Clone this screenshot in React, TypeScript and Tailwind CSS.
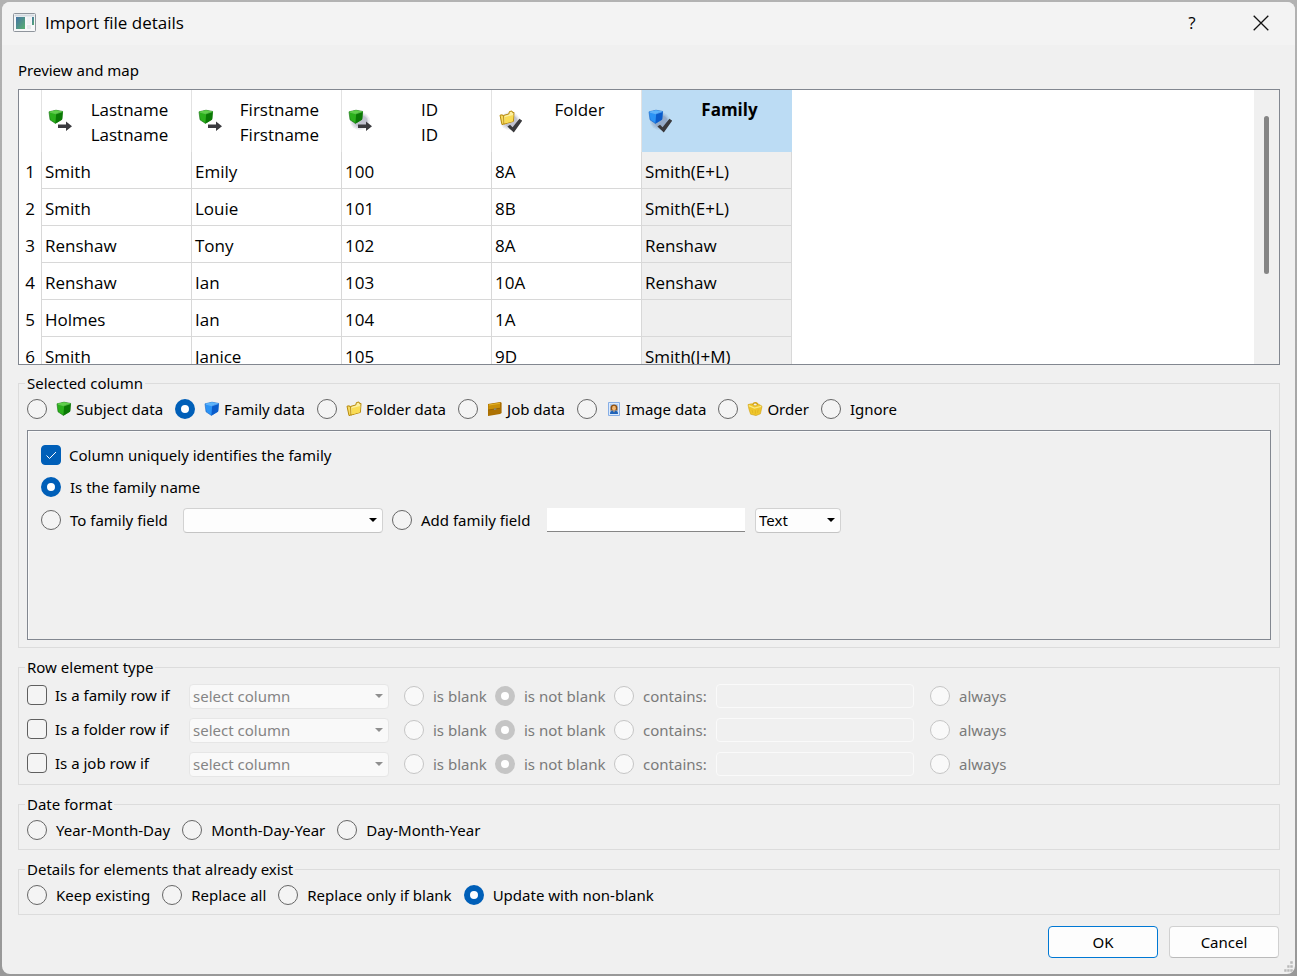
import React, { useId } from "react";

type IconProps = { className?: string };

function CubeShape({ tone }: { tone: "green" | "blue" }) {
  const c =
    tone === "green"
      ? { top: "#5fd04a", left: "#2bb01c", right: "#0b7a05", edge: "#0c6a08", shine: "#7ed56c" }
      : { top: "#5cb4fb", left: "#2b93f5", right: "#0a5ccb", edge: "#0f5fc4", shine: "#7fc2fb" };
  return (
    <g strokeLinejoin="round">
      <path d="M1 2.8 8 1.2l6.6 1.2L14 10.4 7.4 14.4 2 10.8Z" fill={c.left} stroke={c.edge} strokeWidth=".6" />
      <path d="M1 2.8 8 1.2l6.6 1.2-6.4 2.2Z" fill={c.top} />
      <path d="M8.2 4.6l6.4-2.2L14 10.4 7.4 14.4Z" fill={c.right} />
      <path d="M1.6 3.1l6.4 1.7 6-2" stroke={c.shine} strokeWidth=".6" fill="none" />
    </g>
  );
}

function FolderShape() {
  return (
    <g strokeLinejoin="round" stroke="#b78a0c" strokeWidth="1">
      <path d="M1 5.2 3.4 4.8 4 6l3.4-.6L8 13l-5 1.6Z" fill="#f6da62" />
      <path d="M4.6 5.4 9.8 4l.6-2.4L13 1l.6 1.6 1.4-.2-.6 9L5 14Z" fill="#fdf0a0" />
      <path d="M6 7l8.4-2-.4 6.2-8.4 2.4Z" fill="#f9dc55" stroke="none" />
    </g>
  );
}

function Shadow() {
  return (
    <>
      <ellipse cx="12" cy="12" rx="10" ry="9" fill="#53557a" opacity=".1" />
      <ellipse cx="12" cy="12" rx="8.5" ry="7.5" fill="#53557a" opacity=".12" />
      <ellipse cx="12.5" cy="12" rx="7" ry="6" fill="#53557a" opacity=".18" />
    </>
  );
}

function MapIcon({ kind, mark, shadow }: { kind: "subject" | "folder" | "family"; mark: "arrow" | "check"; shadow: boolean }) {
  return (
    <svg viewBox="0 0 24 24" className="size-6 shrink-0" aria-hidden="true">
      {shadow && <Shadow />}
      <g transform={kind === "folder" ? "translate(1 1)" : undefined}>
        {kind === "folder" ? <FolderShape /> : <CubeShape tone={kind === "family" ? "blue" : "green"} />}
      </g>
      {mark === "arrow" ? (
        <path d="M10 15.5h8v-3l6 4.8-6 4.7v-3h-8Z" fill="#3b3b3f" />
      ) : (
        <path d="M9.4 17.6 12 15.8l2.6 2.4 6.8-8.4 2.8 1.8-8.4 11.8Z" fill="#3a3a3d" />
      )}
    </svg>
  );
}

function Small({ children }: { children: React.ReactNode }) {
  return (
    <svg viewBox="0 0 16 16" className="size-4 shrink-0" aria-hidden="true">
      {children}
    </svg>
  );
}

function JobIcon() {
  return (
    <Small>
      <path d="M1 3 13.4 1l1.2.8V12L13 13 1 15Z" fill="#a96d00" />
      <path d="M1.4 3.4 13 1.6V7L1.4 8.8Z" fill="#c98f08" />
      <path d="M2 4 13 2.3" stroke="#e8b82e" strokeWidth=".9" />
      <path d="M1.4 9 13 7.2v5L1.4 14.2Z" fill="#ad7203" />
      <path d="M1.4 9 13 7.2" stroke="#8a5a00" strokeWidth=".6" />
      <path d="M7 7.6l2.4-.4v1.4L7 9Z" fill="#8d8a78" />
    </Small>
  );
}

function ImageIcon() {
  return (
    <Small>
      <path d="M2.5 1.5h11v13h-11Z" fill="#dceafb" stroke="#86aee6" />
      <path d="M4 3h8v10H4Z" fill="#a9c9f2" />
      <path d="M4.6 9.6V6.4C4.6 2.6 11.4 2.6 11.4 6.4v3.2Z" fill="#8e4f10" />
      <ellipse cx="8" cy="7.2" rx="1.9" ry="2.4" fill="#f2b873" />
      <path d="M4 13c0-2.4 1.4-3.4 4-3.4s4 1 4 3.4Z" fill="#1e62b8" />
      <path d="M7 9.4h2L8 11.4Z" fill="#f2b873" />
    </Small>
  );
}

function OrderIcon() {
  return (
    <Small>
      <path d="M5.4 5.6C5.4.6 10.6.4 11 5" fill="none" stroke="#d5a414" strokeWidth="1.4" />
      <path d="M1 3.6l3.4-.8L8 5l3.6-1.8 3.4 2-.6 3.2-1 4.4L9 14.6 3.6 13.2 2 8.4Z" fill="#efc62c" stroke="#cfa013" strokeWidth=".6" strokeLinejoin="round" />
      <path d="M1.8 4.6 7.4 7l6.8-1.6" fill="none" stroke="#fbe882" strokeWidth="1.2" />
      <path d="M5 9l.8 3M8.4 9.2v3.6M11.2 8.4l-.6 3.4" stroke="#d9ab1c" strokeWidth=".6" />
    </Small>
  );
}

function AppIcon({ className }: IconProps) {
  return (
    <svg viewBox="0 0 23 19" className={className} aria-hidden="true">
      <defs>
        <linearGradient id="app-pane" x1="0" y1="0" x2="1" y2="1">
          <stop offset="0" stopColor="#4673a6" />
          <stop offset="1" stopColor="#58b06e" />
        </linearGradient>
      </defs>
      <rect x=".5" y=".5" width="22" height="18" rx="1" fill="#f7f8f9" stroke="#8f959c" />
      <path d="M1.5 1.5h20v2h-20Z" fill="#d3d9df" />
      <rect x="3" y="4" width="9" height="12" fill="url(#app-pane)" />
      <rect x="14" y="4" width="4" height="7" fill="#f0f2f4" />
      <rect x="14" y="12" width="4" height="4" fill="#e6e9ec" />
      <rect x="19" y="4" width="2" height="8" fill="url(#app-pane)" />
    </svg>
  );
}

type RadioProps = {
  name: string;
  label: string;
  icon?: React.ReactNode;
  checked?: boolean;
  disabled?: boolean;
  className?: string;
};

function Radio({ name, label, icon, checked, disabled, className = "" }: RadioProps) {
  return (
    <label className={`flex shrink-0 items-center gap-[9px] whitespace-nowrap ${disabled ? "text-[#7a7a7a]" : ""} ${className}`}>
      <input
        type="radio"
        name={name}
        defaultChecked={checked}
        disabled={disabled}
        className="size-5 shrink-0 appearance-none rounded-full border border-[#666] bg-[#f4f4f4] checked:border-[6px] checked:border-[#005fb8] checked:bg-white disabled:border-[#c5c5c5] disabled:bg-[#f9f9f9] disabled:checked:bg-white"
      />
      <span className="flex items-center gap-1">
        {icon}
        {label}
      </span>
    </label>
  );
}

function Checkbox({ label, checked, className = "" }: { label: string; checked?: boolean; className?: string }) {
  return (
    <label className={`flex shrink-0 items-center gap-2 whitespace-nowrap ${className}`}>
      <span className="relative flex size-5 shrink-0">
        <input
          type="checkbox"
          defaultChecked={checked}
          className="peer size-5 appearance-none rounded border border-[#5f5f5f] bg-[#f4f4f4] checked:border-[#005fb8] checked:bg-[#005fb8]"
        />
        <svg viewBox="0 0 20 20" className="pointer-events-none absolute inset-0 hidden peer-checked:block" aria-hidden="true">
          <path d="M5.5 10.5l3 3 6.5-6.5" fill="none" stroke="#fff" strokeWidth="1" />
        </svg>
      </span>
      {label}
    </label>
  );
}

function Dropdown({ label, value, disabled, className = "" }: { label: string; value: string; disabled?: boolean; className?: string }) {
  return (
    <span className={`relative flex shrink-0 ${className}`}>
      <select
        aria-label={label}
        disabled={disabled}
        className="h-[25px] w-full appearance-none rounded border border-[#d2d2d2] border-b-[#c4c4c4] bg-[#fdfdfd] pl-[3px] leading-5 opacity-100 disabled:border-[#e6e6e6] disabled:bg-[#f9f9f9] disabled:text-[#858585]"
      >
        <option>{value}</option>
      </select>
      <svg
        viewBox="0 0 8 4"
        className={`pointer-events-none absolute top-2.5 right-1.5 h-1 w-2 ${disabled ? "text-[#8f8f8f]" : "text-black"}`}
        aria-hidden="true"
      >
        <path d="M0 0h8L4 4Z" fill="currentColor" />
      </svg>
    </span>
  );
}

function Group({ title, children }: { title: string; children: React.ReactNode }) {
  return (
    <fieldset className="min-w-0 border border-[#dcdcdc] px-2">
      <legend className="-ml-0.5 h-5 px-0.5">{title}</legend>
      {children}
    </fieldset>
  );
}

const columns = [
  { lines: ["Lastname", "Lastname"], kind: "subject", mark: "arrow", shadow: false },
  { lines: ["Firstname", "Firstname"], kind: "subject", mark: "arrow", shadow: false },
  { lines: ["ID", "ID"], kind: "subject", mark: "arrow", shadow: true },
  { lines: ["Folder"], kind: "folder", mark: "check", shadow: true },
  { lines: ["Family"], kind: "family", mark: "check", shadow: true },
] as const;

const rows = [
  ["Smith", "Emily", "100", "8A", "Smith(E+L)"],
  ["Smith", "Louie", "101", "8B", "Smith(E+L)"],
  ["Renshaw", "Tony", "102", "8A", "Renshaw"],
  ["Renshaw", "Ian", "103", "10A", "Renshaw"],
  ["Holmes", "Ian", "104", "1A", ""],
  ["Smith", "Janice", "105", "9D", "Smith(J+M)"],
];

function PreviewTable() {
  return (
    <div className="flex h-[276px] overflow-hidden border border-[#828790] bg-white font-['Open_Sans',sans-serif] text-[17px]">
      <div className="min-w-0 flex-1">
        <table className="w-[773px] table-fixed border-separate border-spacing-0">
          <thead>
            <tr className="h-[62px]">
              <td className="w-[23px] border-r border-[#e2e2e2]" />
              {columns.map((c, i) => (
                <th
                  key={c.lines[0]}
                  scope="col"
                  className={`w-[150px] border-r p-0 align-top ${i === 4 ? "border-[#bcdcf4] bg-[#bcdcf4] font-bold" : "border-[#e2e2e2] font-normal"}`}
                >
                  <div className="flex h-[62px] items-center pr-1 pl-1.5">
                    <MapIcon kind={c.kind} mark={c.mark} shadow={c.shadow} />
                    <div className="h-12 flex-1 leading-[25px]">
                      {c.lines.map((l, n) => (
                        <div key={n}>{l}</div>
                      ))}
                    </div>
                  </div>
                </th>
              ))}
            </tr>
          </thead>
          <tbody>
            {rows.map((r, i) => (
              <tr key={i} className="h-[37px]">
                <th scope="row" className="border-r border-[#d8d8d8] p-0 pt-0.5 font-normal leading-[34px]">
                  {i + 1}
                </th>
                {r.map((v, j) => (
                  <td
                    key={j}
                    className={`border-r border-b border-[#d8d8d8] p-0 pt-[3px] pl-[3px] leading-[33px] ${j === 4 ? "bg-[#efefef]" : ""}`}
                  >
                    {v}
                  </td>
                ))}
              </tr>
            ))}
          </tbody>
        </table>
      </div>
      <div className="flex w-[25px] justify-center bg-[#f0f0f0] pt-[26px]">
        <div className="h-[158px] w-[5px] rounded-full bg-[#858585]" />
      </div>
    </div>
  );
}

function RowRule({ kind }: { kind: string }) {
  const name = useId();
  return (
    <div className="flex h-6 items-center">
      <Checkbox label={`Is a ${kind} row if`} className="w-[162px] pb-0.5" />
      <Dropdown label={`Column for ${kind} row`} value="select column" disabled className="w-[200px]" />
      <Radio name={name} label="is blank" disabled className="ml-[15px] w-[91px]" />
      <Radio name={name} label="is not blank" checked disabled className="w-[119px]" />
      <Radio name={name} label="contains:" disabled className="w-[102px]" />
      <input
        type="text"
        disabled
        aria-label={`Text the ${kind} row contains`}
        className="h-6 w-[198px] shrink-0 rounded-sm border border-[#fafafa] bg-[#f0f0f0] px-1"
      />
      <Radio name={name} label="always" disabled className="ml-4" />
    </div>
  );
}

const grip = [
  [6, 0],
  [3, 4],
  [6, 4],
  [0, 8],
  [3, 8],
  [6, 8],
];

export default function App() {
  return (
    <div className="flex min-h-screen bg-linear-to-b from-[#b2b2b2] to-[#989898] p-0.5 font-['Noto_Sans',sans-serif] text-[15px] leading-5 text-black">
      <main className="relative flex min-w-0 flex-1 flex-col overflow-hidden rounded-lg bg-[#f0f0f0]">
        <header className="flex h-[43px] items-center bg-[#f3f3f3] pb-0.5 pl-[11px]">
          <AppIcon className="h-[19px] w-[23px]" />
          <h1 className="ml-[9px] flex-1 font-['Open_Sans',sans-serif] text-[17px]">Import file details</h1>
          <button type="button" aria-label="Help" className="flex h-full w-[70px] items-center justify-center font-['Open_Sans',sans-serif] text-[17px]">
            ?
          </button>
          <button type="button" aria-label="Close" className="flex h-full w-[68px] items-center justify-center">
            <svg viewBox="0 0 16 16" className="size-4" aria-hidden="true">
              <path d="M.7.7l14.6 14.6M15.3.7.7 15.3" stroke="#111" strokeWidth="1.3" />
            </svg>
          </button>
        </header>

        <div className="flex flex-col gap-[9px] pt-[15px] pr-[15px] pb-4 pl-4">
          <section className="-mb-px flex flex-col gap-[9px]">
            <h2>Preview and map</h2>
            <PreviewTable />
          </section>

          <Group title="Selected column">
            <div className="flex gap-3 pt-1.5">
              <Radio name="target" label="Subject data" icon={<Small><CubeShape tone="green" /></Small>} />
              <Radio name="target" label="Family data" checked icon={<Small><CubeShape tone="blue" /></Small>} />
              <Radio name="target" label="Folder data" icon={<Small><FolderShape /></Small>} />
              <Radio name="target" label="Job data" icon={<JobIcon />} />
              <Radio name="target" label="Image data" icon={<ImageIcon />} />
              <Radio name="target" label="Order" icon={<OrderIcon />} />
              <Radio name="target" label="Ignore" />
            </div>
            <div className="mt-[11px] mb-[7px] flex h-[210px] flex-col gap-3 border border-[#828790] pt-3.5 pl-[13px] shadow-[inset_1px_1px_0_#fafafa]">
              <Checkbox label="Column uniquely identifies the family" checked />
              <Radio name="family" label="Is the family name" checked />
              <div className="-mt-px flex h-6 items-center">
                <Radio name="family" label="To family field" className="w-[142px]" />
                <Dropdown label="Family field" value="" className="w-[200px]" />
                <Radio name="family" label="Add family field" className="ml-[9px] w-[155px]" />
                <input
                  type="text"
                  aria-label="New family field"
                  className="h-6 w-[198px] shrink-0 border-b border-[#868686] bg-white px-1"
                />
                <Dropdown label="Field type" value="Text" className="ml-2.5 w-[86px]" />
              </div>
            </div>
          </Group>

          <Group title="Row element type">
            <div className="flex flex-col gap-2.5 pt-[7px] pb-2">
              <RowRule kind="family" />
              <RowRule kind="folder" />
              <RowRule kind="job" />
            </div>
          </Group>

          <Group title="Date format">
            <div className="flex gap-3 pt-1.5 pb-[9px]">
              <Radio name="date" label="Year-Month-Day" />
              <Radio name="date" label="Month-Day-Year" />
              <Radio name="date" label="Day-Month-Year" />
            </div>
          </Group>

          <Group title="Details for elements that already exist">
            <div className="flex gap-3 pt-1.5 pb-[9px]">
              <Radio name="existing" label="Keep existing" />
              <Radio name="existing" label="Replace all" />
              <Radio name="existing" label="Replace only if blank" />
              <Radio name="existing" label="Update with non-blank" checked />
            </div>
          </Group>

          <footer className="mt-0.5 flex justify-end gap-[11px] pr-px">
            <button type="button" className="h-8 w-[110px] rounded border border-[#0078d4] bg-[#fdfdfd]">
              OK
            </button>
            <button type="button" className="h-8 w-[110px] rounded border border-[#d0d0d0] border-b-[#bababa] bg-[#fdfdfd]">
              Cancel
            </button>
          </footer>
        </div>

        <svg viewBox="0 0 9 11" className="absolute right-0.5 bottom-0.5 h-[11px] w-[9px]" aria-hidden="true">
          {grip.map(([x, y]) => (
            <rect key={`${x}-${y}`} x={x} y={y} width="3" height="3" fill="#b9b9b9" stroke="#f0f0f0" strokeWidth=".5" />
          ))}
        </svg>
      </main>
    </div>
  );
}
